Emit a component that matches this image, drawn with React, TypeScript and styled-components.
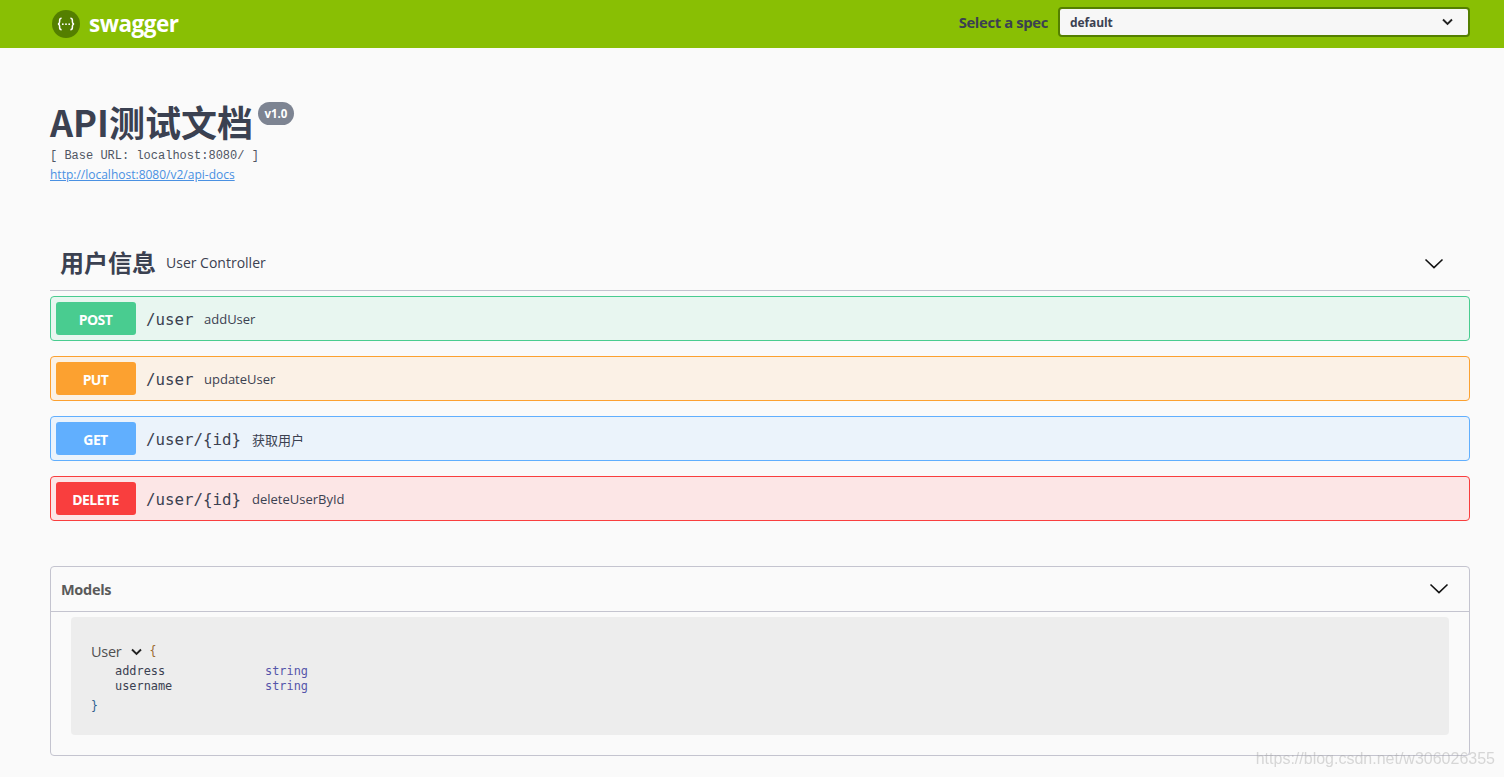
import React from "react";
import styled, { createGlobalStyle } from "styled-components";

const Global = createGlobalStyle`
  html, body { margin: 0; padding: 0; background: #fafafa; }
  body { font-family: "Open Sans", "Noto Sans CJK SC", sans-serif; color: #3b4151; height: 777px; overflow: hidden; position: relative; }
`;

const Topbar = styled.header`
  box-sizing: border-box;
  height: 48px;
  background: #89bf04;
  padding: 0 34px 4px 52px;
  display: flex;
  align-items: center;
  justify-content: space-between;
`;
const Brand = styled.div`
  display: flex;
  align-items: center;
  gap: 9px;
  margin-top: 3px;
`;
const BrandName = styled.span`
  font-family: "Open Sans", sans-serif;
  font-weight: 700;
  font-size: 22.5px;
  letter-spacing: -0.5px;
  color: #fff;
  margin-top: -1px;
`;
const SpecForm = styled.div`
  display: flex;
  align-items: center;
  gap: 10px;
`;
const SpecLabel = styled.span`
  font-family: "Open Sans", sans-serif;
  font-weight: 700;
  font-size: 14.8px;
  letter-spacing: -0.35px;
  color: #3b4151;
`;
const SpecSelect = styled.div`
  box-sizing: border-box;
  width: 412px;
  height: 30px;
  border: 2px solid #547f00;
  border-radius: 4px;
  background: #f7f7f7;
  display: flex;
  align-items: center;
  justify-content: space-between;
  padding: 0 15px 0 10px;
  font-weight: 700;
  font-size: 12px;
  letter-spacing: -0.1px;
  color: #3b4151;
`;

const Wrapper = styled.main`
  padding: 0 34px 0 50px;
`;
const Info = styled.section`
  padding-top: 50px;
  height: 140px;
`;
const TitleRow = styled.div`
  display: flex;
  align-items: flex-start;
  height: 45px;
`;
const Title = styled.h1`
  margin: 0;
  font-family: "Noto Sans CJK SC", "Noto Sans", sans-serif;
  font-weight: 700;
  font-size: 36px;
  line-height: 46px;
  color: #3b4151;
`;
const Version = styled.span`
  margin: 4px 0 0 5px;
  height: 23px;
  padding: 0 6.5px;
  border-radius: 12px;
  background: #7d8492;
  color: #fff;
  font-weight: 700;
  font-size: 11.5px;
  line-height: 23px;
`;
const BaseUrl = styled.div`
  margin-top: 7px;
  font-family: "Liberation Mono", monospace;
  font-size: 12px;
  line-height: 13px;
  color: #4f5563;
`;
const DocsLink = styled.a`
  display: block;
  margin-top: 5px;
  font-size: 12px;
  line-height: 14px;
  color: #4990e2;
  text-decoration: underline;
`;

const TagHeader = styled.div`
  box-sizing: border-box;
  height: 53px;
  display: flex;
  align-items: center;
  padding: 0 26px 4px 10px;
  border-bottom: 1px solid #c4c4cf;
`;
const TagName = styled.h4`
  margin: 0;
  font-family: "Noto Sans CJK SC", sans-serif;
  font-weight: 700;
  font-size: 24px;
  line-height: 32px;
  color: #3b4151;
`;
const TagDesc = styled.span`
  margin-left: 10px;
  font-size: 14px;
  color: #3b4151;
`;
const TagCaret = styled.span`
  display: flex;
  margin-top: 4px;
`;
const Spacer = styled.div`
  flex: 1;
`;

const Blocks = styled.div`
  display: flex;
  flex-direction: column;
  gap: 15px;
  margin-top: 5px;
`;
const Block = styled.div<{ $border: string; $bg: string }>`
  box-sizing: border-box;
  height: 45px;
  border: 1px solid ${(p) => p.$border};
  background: ${(p) => p.$bg};
  border-radius: 4px;
  padding: 0 5px;
  display: flex;
  align-items: center;
`;
const Method = styled.span<{ $bg: string }>`
  width: 80px;
  height: 33px;
  padding: 1px 1px 0 0;
  box-sizing: border-box;
  border-radius: 3px;
  background: ${(p) => p.$bg};
  color: #fff;
  font-weight: 700;
  font-size: 14px;
  letter-spacing: -0.6px;
  display: flex;
  align-items: center;
  justify-content: center;
`;
const Path = styled.span<{ $w: number }>`
  margin-left: 10px;
  font-family: "DejaVu Sans Mono", monospace;
  font-size: 15.8px;
  color: #3b4151;
  width: ${(p) => p.$w}px;
  margin-top: 1px;
`;
const Summary = styled.span`
  font-family: "Open Sans", "Noto Sans CJK SC", sans-serif;
  font-size: 13px;
  margin-top: 1px;
  color: #3b4151;
`;

const Models = styled.section`
  box-sizing: border-box;
  margin-top: 45px;
  height: 190px;
  border: 1px solid #c4c4cf;
  border-radius: 4px;
`;
const ModelsHeader = styled.div`
  box-sizing: border-box;
  height: 45px;
  display: flex;
  align-items: center;
  padding: 0 20px 0 10px;
  border-bottom: 1px solid #c4c4cf;
`;
const ModelsTitle = styled.h4`
  margin: 0;
  font-weight: 700;
  font-size: 14.5px;
  letter-spacing: -0.3px;
  color: #5a5a5a;
`;
const ModelBox = styled.div`
  box-sizing: border-box;
  height: 118px;
  margin: 5px 20px 0;
  padding: 24px 20px 0;
  background: #ededed;
  border-radius: 4px;
`;
const ModelHead = styled.div`
  display: flex;
  align-items: center;
  height: 20px;
`;
const ModelName = styled.span`
  font-size: 14.5px;
  letter-spacing: -0.25px;
  color: #505050;
`;
const Brace = styled.span<{ $c: string }>`
  font-family: "DejaVu Sans Mono", monospace;
  font-size: 11.5px;
  color: ${(p) => p.$c};
`;
const ModelCaret = styled.span`
  display: flex;
  margin: 2px 8px 0 9px;
`;
const Props = styled.div`
  padding-left: 24px;
  display: grid;
  grid-template-columns: 150px auto;
  justify-content: start;
  font-family: "DejaVu Sans Mono", monospace;
  font-size: 11.9px;
  line-height: 15px;
  margin-top: 3px;
`;
const PropName = styled.span`
  color: #3b4151;
`;
const PropType = styled.span`
  color: #55a;
`;
const CloseRow = styled.div`
  margin-top: 3px;
  line-height: 15px;
`;
const Watermark = styled.div`
  position: absolute;
  right: 9px;
  top: 749px;
  font-family: "Liberation Sans", sans-serif;
  font-size: 16px;
  line-height: 20px;
  color: rgba(160, 160, 160, 0.4);
  filter: blur(0.4px);
`;

const Logo = () => (
  <svg width="28" height="28" viewBox="0 0 28 28">
    <circle cx="14" cy="14" r="14" fill="#547f00" />
    <path d="M9.6 8.2c-1.8 0-2 1-2 2.2v1.6c0 1.2-.6 1.8-1.6 2 1 .2 1.6.8 1.6 2v1.6c0 1.2.2 2.2 2 2.2M18.4 8.2c1.8 0 2 1 2 2.2v1.6c0 1.2.6 1.8 1.6 2-1 .2-1.6.8-1.6 2v1.6c0 1.2-.2 2.2-2 2.2" fill="none" stroke="#fff" strokeWidth="1.5" />
    <circle cx="10.8" cy="14.2" r=".9" fill="#fff" />
    <circle cx="14" cy="14.2" r=".9" fill="#fff" />
    <circle cx="17.2" cy="14.2" r=".9" fill="#fff" />
  </svg>
);

const Caret = ({ size }: { size: number }) => (
  <svg width={size} height={size} viewBox="0 0 20 20">
    <path d="M1.5 5.5 10 13.6l8.5-8.1" fill="none" stroke="#111" strokeWidth="1.6" />
  </svg>
);

const SmallCaret = () => (
  <svg width="11" height="8" viewBox="0 0 11 8">
    <path d="M1 1.5 5.5 6 10 1.5" fill="none" stroke="#222" strokeWidth="1.9" />
  </svg>
);

const ops = [
  { m: "POST", c: "#49cc90", bg: "#e8f6f0", p: "/user", w: 58, s: "addUser" },
  { m: "PUT", c: "#fca130", bg: "#fbf1e6", p: "/user", w: 58, s: "updateUser" },
  { m: "GET", c: "#61affe", bg: "#ebf3fb", p: "/user/{id}", w: 106, s: "获取用户" },
  { m: "DELETE", c: "#f93e3e", bg: "#fce6e6", p: "/user/{id}", w: 106, s: "deleteUserById" },
];

export default function App() {
  return (
    <>
      <Global />
      <Topbar>
        <Brand>
          <Logo />
          <BrandName>swagger</BrandName>
        </Brand>
        <SpecForm>
          <SpecLabel>Select a spec</SpecLabel>
          <SpecSelect>
            default
            <SmallCaret />
          </SpecSelect>
        </SpecForm>
      </Topbar>
      <Wrapper>
        <Info>
          <TitleRow>
            <Title>API测试文档</Title>
            <Version>v1.0</Version>
          </TitleRow>
          <BaseUrl>[ Base URL: localhost:8080/ ]</BaseUrl>
          <DocsLink href="#">http://localhost:8080/v2/api-docs</DocsLink>
        </Info>
        <TagHeader>
          <TagName>用户信息</TagName>
          <TagDesc>User Controller</TagDesc>
          <Spacer />
          <TagCaret>
            <Caret size={20} />
          </TagCaret>
        </TagHeader>
        <Blocks>
          {ops.map((o) => (
            <Block key={o.m} $border={o.c} $bg={o.bg}>
              <Method $bg={o.c}>{o.m}</Method>
              <Path $w={o.w}>{o.p}</Path>
              <Summary>{o.s}</Summary>
            </Block>
          ))}
        </Blocks>
        <Models>
          <ModelsHeader>
            <ModelsTitle>Models</ModelsTitle>
            <Spacer />
            <Caret size={20} />
          </ModelsHeader>
          <ModelBox>
            <ModelHead>
              <ModelName>User</ModelName>
              <ModelCaret>
                <SmallCaret />
              </ModelCaret>
              <Brace $c="#9b6a2f">{"{"}</Brace>
            </ModelHead>
            <Props>
              <PropName>address</PropName>
              <PropType>string</PropType>
              <PropName>username</PropName>
              <PropType>string</PropType>
            </Props>
            <CloseRow>
              <Brace $c="#2f5f8f">{"}"}</Brace>
            </CloseRow>
          </ModelBox>
        </Models>
      </Wrapper>
      <Watermark>https://blog.csdn.net/w306026355</Watermark>
    </>
  );
}
